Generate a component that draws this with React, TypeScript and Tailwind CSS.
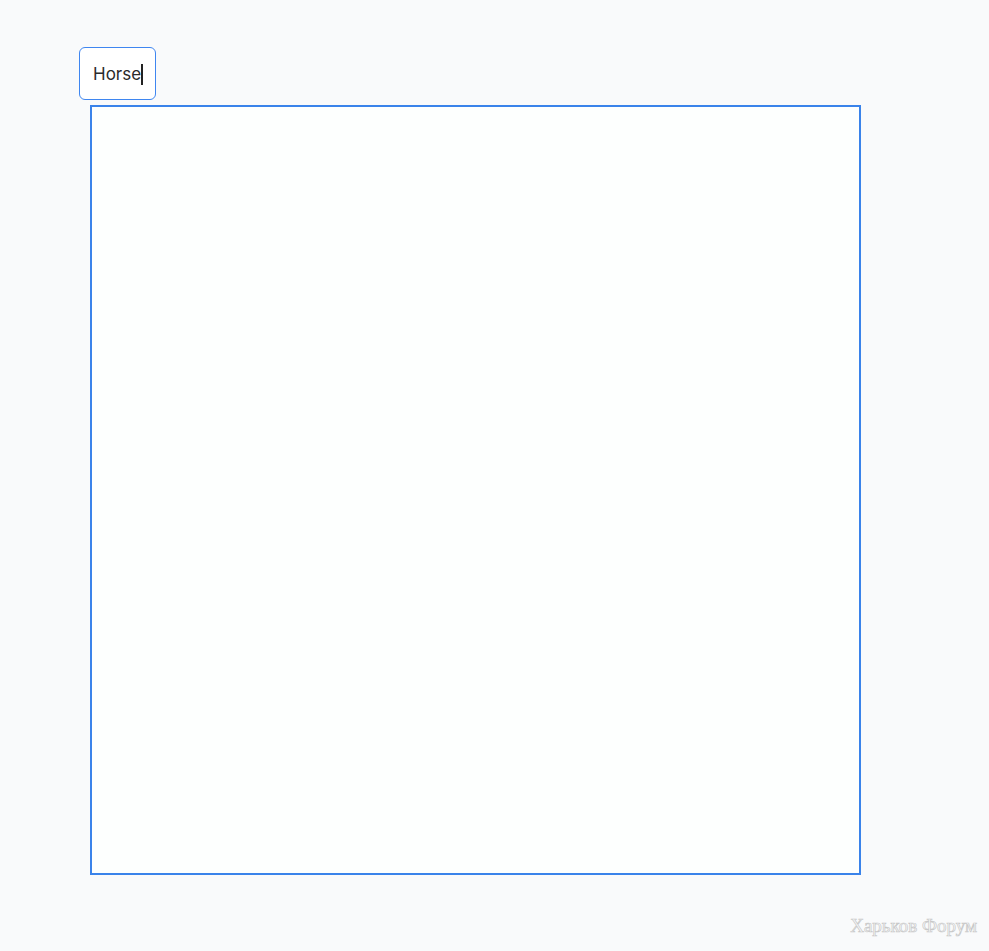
import React from "react";

export default function App() {
  return (
    <div className="relative min-h-[951px] w-full bg-[#f9fafb] overflow-hidden" style={{ fontFamily: '"Open Sans", "Noto Sans", sans-serif' }}>
      <div className="pt-[47px] pl-[79px]">
        <div className="flex h-[53px] w-[77px] items-center rounded-[6px] border border-[#3f86f0] bg-white pl-[13px] pt-[2px]">
          <span className="text-[17px] leading-none text-[#2b2b2b]" style={{ fontFamily: 'Inter, "Open Sans", sans-serif' }}>Horse</span>
          <span className="h-[21px] w-[2px] bg-[#222]" />
        </div>
      </div>
      <div className="ml-[90px] mt-[5px] h-[770px] w-[771px] border-2 border-[#3a83ea] bg-[#fdfffe]" />
      <div
        className="absolute right-[12px] top-[916px] text-[19px] leading-none text-transparent"
        style={{ fontFamily: '"Liberation Serif", "DejaVu Serif", serif', WebkitTextStroke: "0.7px #c8c8c8" }}
      >
        Харьков Форум
      </div>
    </div>
  );
}
